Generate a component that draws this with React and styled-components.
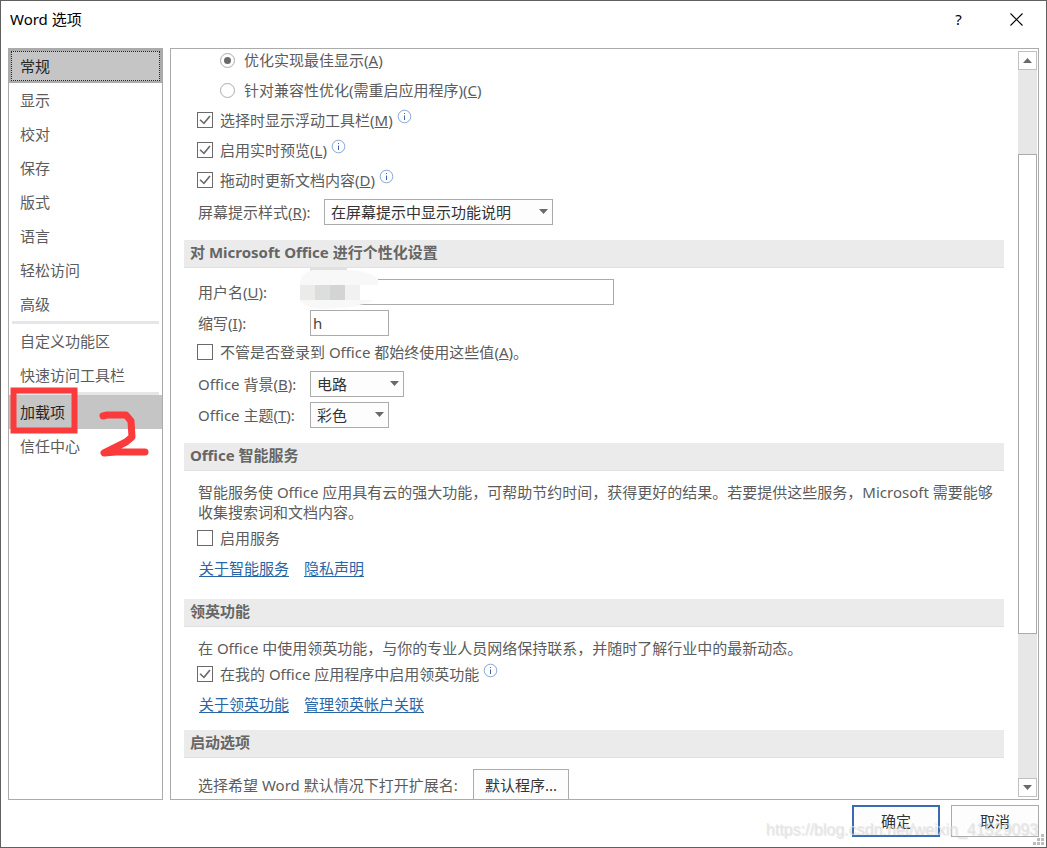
import styled, { createGlobalStyle, css } from "styled-components";

const GlobalStyle = createGlobalStyle`
  * {
    box-sizing: border-box;
  }

  body {
    margin: 0;
    background: #fff;
  }

  body,
  button,
  input,
  select {
    font-family: "Noto Sans", "Noto Sans CJK SC", sans-serif;
    font-size: 15px;
    line-height: 20px;
    color: #5c5c5c;
  }
`;

const Dialog = styled.div`
  position: relative;
  display: flex;
  flex-direction: column;
  height: 100vh;
  padding: 0 7px;
  border: 1px solid #606060;
  background: #fff;
  overflow: hidden;
`;

const TitleBar = styled.header`
  display: flex;
  align-items: center;
  flex: none;
  height: 47px;
  padding: 0 8px 11px 2px;
`;

const Title = styled.h1`
  flex: 1;
  margin: 0;
  font-size: 15px;
  font-weight: 400;
  color: #000;
`;

const TitleButton = styled.button`
  display: flex;
  align-items: center;
  justify-content: center;
  width: 29px;
  height: 29px;
  margin-left: 29px;
  padding: 0;
  border: 0;
  background: none;
  color: #000;
`;

const Body = styled.div`
  display: flex;
  flex: 1;
  gap: 7px;
  min-height: 0;
`;

const Sidebar = styled.nav`
  position: relative;
  flex: none;
  width: 155px;
  border: 1px solid #ababab;
`;

const NavItem = styled.button`
  display: block;
  width: 100%;
  height: 34px;
  padding: 0 11px;
  border: 0;
  background: none;
  text-align: left;

  ${(props) =>
    props.$highlight &&
    css`
      background: #c5c5c5;
      color: #262626;
    `}

  ${(props) =>
    props.$focused &&
    css`
      padding: 0 9px;
      border: 2px solid #ababab;
      outline: 1px dotted #262626;
      outline-offset: -3px;
    `}
`;

const Divider = styled.hr`
  height: 3px;
  margin: 0 3px;
  border: 0;
  background: #e6e6e6;
`;

const Marks = styled.svg`
  position: absolute;
  left: 0;
  top: 335px;
  pointer-events: none;
`;

const Pane = styled.main`
  display: flex;
  flex: 1;
  gap: 14px;
  min-width: 0;
  padding: 0 1px 0 13px;
  border: 1px solid #ababab;
`;

const Content = styled.div`
  flex: 1;
  min-width: 0;
  overflow: hidden;
`;

const Section = styled.section`
  display: flow-root;
  margin-bottom: ${(props) => (props.$spaced ? 15 : 10)}px;
`;

const SectionTitle = styled.h2`
  height: 28px;
  margin: 0 0 11px;
  padding: 1px 6px 0;
  border-bottom: 1px solid #e1e1e1;
  background: #ebebeb;
  font-size: 15px;
  line-height: 22px;
  font-weight: 700;
  color: #666;
`;

const OptionRow = styled.div`
  display: flex;
  align-items: center;
  gap: ${(props) => (props.$indent ? 9 : 7)}px;
  height: 22px;
  margin-bottom: 8px;
  padding-left: ${(props) => (props.$indent ? 36 : 13)}px;
`;

const Tick = styled.input`
  appearance: none;
  display: grid;
  place-items: center;
  flex: none;
  width: 16px;
  height: 16px;
  margin: 0;
  border: 1px solid #6a6a6a;
  background: #fff;

  &:checked::before {
    content: "";
    width: 12px;
    height: 10px;
    background: #6a6a6a;
    clip-path: polygon(4% 52%, 14% 42%, 40% 72%, 86% 6%, 97% 16%, 42% 94%);
  }
`;

const Radio = styled.input`
  appearance: none;
  display: grid;
  place-items: center;
  flex: none;
  width: 15px;
  height: 15px;
  margin: 0;
  border: 1px solid #ababab;
  border-radius: 50%;
  background: #fff;

  &:checked::before {
    content: "";
    width: 7px;
    height: 7px;
    border-radius: 50%;
    background: #6a6a6a;
  }
`;

const InfoButton = styled.button`
  display: flex;
  align-self: flex-start;
  margin: 0 0 0 -3px;
  padding: 0;
  border: 0;
  background: none;
`;

const FieldRow = styled.div`
  position: relative;
  display: flex;
  align-items: center;
  height: 26px;
  margin-bottom: 5px;
  padding-left: 14px;
`;

const FieldLabel = styled.label`
  flex: none;
  width: ${(props) => props.$width || 112}px;
`;

const TextBox = styled.input`
  width: ${(props) => props.$width}px;
  height: 26px;
  padding: 0 2px;
  border: 1px solid #ababab;
  background: #fff;
  color: #444;
`;

const SelectBox = styled.div`
  position: relative;
  width: ${(props) => props.$width}px;

  &::after {
    content: "";
    position: absolute;
    top: 10px;
    right: 5px;
    width: 9px;
    height: 5px;
    background: #6a6a6a;
    clip-path: polygon(0 0, 100% 0, 50% 100%);
    pointer-events: none;
  }

  select {
    appearance: none;
    display: block;
    width: 100%;
    height: 26px;
    padding: 0 6px;
    border: 1px solid #ababab;
    border-radius: 0;
    background: #fdfdfd;
    color: #333;
  }
`;

const Smudge = styled.svg`
  position: absolute;
  left: 116px;
  top: -12px;
`;

const Paragraph = styled.p`
  margin: 0 0 5px;
  padding-left: 14px;
`;

const Links = styled.div`
  display: flex;
  align-items: center;
  gap: 15px;
  height: 22px;
  margin-bottom: 5px;
  padding-left: 15px;

  a {
    color: #2a66a6;
    text-underline-offset: 2px;
  }
`;

const Button = styled.button`
  width: ${(props) => props.$width || 88}px;
  height: 32px;
  padding: 0;
  border: ${(props) => (props.$primary ? "2px solid #3c6ab4" : "1px solid #ababab")};
  background: #fdfdfd;
  color: #333;
`;

const FileTypeRow = styled(FieldRow)`
  height: 32px;
`;

const ScrollBar = styled.div`
  display: flex;
  flex-direction: column;
  flex: none;
  width: 19px;
  margin: 2px 0;
  background: #e7e7e7;
`;

const ScrollButton = styled.button`
  display: flex;
  align-items: center;
  justify-content: center;
  flex: none;
  height: 19px;
  padding: 0;
  border: 1px solid #c0c0c0;
  background: #fff;
`;

const ScrollSpace = styled.div`
  flex: ${(props) => props.$size} 0 0;
`;

const ScrollThumb = styled(ScrollSpace)`
  border: 1px solid #ababab;
  background: #fff;
`;

const Footer = styled.footer`
  display: flex;
  justify-content: flex-end;
  gap: 11px;
  flex: none;
  height: 47px;
  padding-top: 5px;
`;

const Watermark = styled.span`
  position: absolute;
  right: 8px;
  bottom: 7px;
  font-family: "Liberation Sans", Arial, sans-serif;
  font-size: 16px;
  color: rgba(225, 225, 225, 0.7);
  text-shadow: 1px 1px 1px rgba(150, 150, 150, 0.25);
  pointer-events: none;
`;

const Grip = styled.svg`
  position: absolute;
  right: 2px;
  bottom: 2px;
`;

const Info = () => (
  <InfoButton aria-label="信息">
    <svg width="15" height="15" viewBox="0 0 15 15" fill="none">
      <circle cx="7.5" cy="7.5" r="6.3" stroke="#8aa8d6" />
      <path d="M7.5 6.5v4.5" stroke="#3d64a8" />
      <path d="M7.5 4v1" stroke="#3d64a8" />
    </svg>
  </InfoButton>
);

const Key = ({ k }) => (
  <>
    (<u>{k}</u>)
  </>
);

function Check({ id, checked, info, children }) {
  return (
    <OptionRow>
      <Tick type="checkbox" id={id} defaultChecked={checked} />
      <label htmlFor={id}>{children}</label>
      {info && <Info />}
    </OptionRow>
  );
}

function Choice({ id, checked, children }) {
  return (
    <OptionRow $indent>
      <Radio type="radio" name="display" id={id} defaultChecked={checked} />
      <label htmlFor={id}>{children}</label>
    </OptionRow>
  );
}

function SelectField({ id, label, k, value, width, labelWidth }) {
  return (
    <FieldRow>
      <FieldLabel htmlFor={id} $width={labelWidth}>
        {label}
        <Key k={k} />:
      </FieldLabel>
      <SelectBox $width={width}>
        <select id={id}>
          <option>{value}</option>
        </select>
      </SelectBox>
    </FieldRow>
  );
}

const basicPages = ["显示", "校对", "保存", "版式", "语言", "轻松访问", "高级"];

export default function App() {
  return (
    <>
      <GlobalStyle />
      <Dialog role="dialog" aria-labelledby="title">
        <TitleBar>
          <Title id="title">Word 选项</Title>
          <TitleButton aria-label="帮助">?</TitleButton>
          <TitleButton aria-label="关闭">
            <svg width="13" height="13" viewBox="0 0 13 13">
              <path d="M.5.5l12 12M12.5.5l-12 12" stroke="#000" strokeWidth="1.1" />
            </svg>
          </TitleButton>
        </TitleBar>

        <Body>
          <Sidebar>
            <NavItem $highlight $focused>
              常规
            </NavItem>
            {basicPages.map((page) => (
              <NavItem key={page}>{page}</NavItem>
            ))}
            <Divider />
            <NavItem>自定义功能区</NavItem>
            <NavItem>快速访问工具栏</NavItem>
            <Divider />
            <NavItem $highlight>加载项</NavItem>
            <NavItem>信任中心</NavItem>
            <Marks width="150" height="80" viewBox="9 384 150 80" fill="none" stroke="#fb3b3b">
              <rect x="13.5" y="390.5" width="61" height="40" strokeWidth="6" />
              <path
                d="M103 416l4-1h19l5 6 1 16-6 5-22 11 12-1h29"
                strokeWidth="7"
                strokeLinecap="round"
                strokeLinejoin="round"
              />
            </Marks>
          </Sidebar>

          <Pane>
            <Content>
              <Section>
                <Choice id="best" checked>
                  优化实现最佳显示
                  <Key k="A" />
                </Choice>
                <Choice id="compat">
                  针对兼容性优化(需重启应用程序)
                  <Key k="C" />
                </Choice>
                <Check id="mini" checked info>
                  选择时显示浮动工具栏
                  <Key k="M" />
                </Check>
                <Check id="preview" checked info>
                  启用实时预览
                  <Key k="L" />
                </Check>
                <Check id="drag" checked info>
                  拖动时更新文档内容
                  <Key k="D" />
                </Check>
                <SelectField
                  id="tips"
                  label="屏幕提示样式"
                  k="R"
                  value="在屏幕提示中显示功能说明"
                  width={229}
                  labelWidth={126}
                />
              </Section>

              <Section>
                <SectionTitle>对 Microsoft Office 进行个性化设置</SectionTitle>
                <FieldRow>
                  <FieldLabel htmlFor="user">
                    用户名
                    <Key k="U" />:
                  </FieldLabel>
                  <TextBox id="user" $width={304} />
                  <Smudge width="80" height="42" viewBox="0 0 80 42">
                    <path d="M10 1h37v3H10z" fill="#e1e1e1" />
                    <path
                      d="M0 16C1 9 6 4 14 3h32c14 0 26 3 32 9v6H60v15h13c-3 3-9 4-14 5v1c-8 1-18 2-26 2-14 2-28 0-33-8z"
                      fill="#f8f8f8"
                    />
                    <path d="M60 18h15v14H60z" fill="#fff" />
                    <path d="M0 18h15v15H0z" fill="#ebebea" />
                    <path d="M15 18h15v15H15z" fill="#dcdddd" />
                    <path d="M30 18h15v15H30z" fill="#d4d4d4" />
                    <path d="M45 18h15v15H45z" fill="#f1f1f1" />
                  </Smudge>
                </FieldRow>
                <FieldRow>
                  <FieldLabel htmlFor="initials">
                    缩写
                    <Key k="I" />:
                  </FieldLabel>
                  <TextBox id="initials" $width={79} defaultValue="h" />
                </FieldRow>
                <Check id="always">
                  不管是否登录到 Office 都始终使用这些值
                  <Key k="A" />。
                </Check>
                <SelectField id="background" label="Office 背景" k="B" value="电路" width={94} />
                <SelectField id="theme" label="Office 主题" k="T" value="彩色" width={79} />
              </Section>

              <Section $spaced>
                <SectionTitle>Office 智能服务</SectionTitle>
                <Paragraph>
                  智能服务使 Office 应用具有云的强大功能，可帮助节约时间，获得更好的结果。若要提供这些服务，Microsoft
                  需要能够收集搜索词和文档内容。
                </Paragraph>
                <Check id="services">启用服务</Check>
                <Links>
                  <a href="#services-about">关于智能服务</a>
                  <a href="#privacy">隐私声明</a>
                </Links>
              </Section>

              <Section>
                <SectionTitle>领英功能</SectionTitle>
                <Paragraph>
                  在 Office 中使用领英功能，与你的专业人员网络保持联系，并随时了解行业中的最新动态。
                </Paragraph>
                <Check id="linkedin" checked info>
                  在我的 Office 应用程序中启用领英功能
                </Check>
                <Links>
                  <a href="#linkedin-about">关于领英功能</a>
                  <a href="#linkedin-account">管理领英帐户关联</a>
                </Links>
              </Section>

              <Section>
                <SectionTitle>启动选项</SectionTitle>
                <FileTypeRow>
                  <FieldLabel htmlFor="defaults" $width={275}>
                    选择希望 Word 默认情况下打开扩展名:
                  </FieldLabel>
                  <Button id="defaults" $width={96}>
                    默认程序...
                  </Button>
                </FileTypeRow>
              </Section>
            </Content>

            <ScrollBar>
              <ScrollButton aria-label="向上滚动">
                <svg width="9" height="5" viewBox="0 0 9 5">
                  <path d="M0 5L4.500 0 9 5z" fill="#6a6a6a" />
                </svg>
              </ScrollButton>
              <ScrollSpace $size={84} />
              <ScrollThumb $size={480} />
              <ScrollSpace $size={144} />
              <ScrollButton aria-label="向下滚动">
                <svg width="9" height="5" viewBox="0 0 9 5">
                  <path d="M0 0h9L4.500 5z" fill="#6a6a6a" />
                </svg>
              </ScrollButton>
            </ScrollBar>
          </Pane>
        </Body>

        <Footer>
          <Button $primary>确定</Button>
          <Button>取消</Button>
        </Footer>
        <Watermark>https://blog.csdn.net/weixin_41529093</Watermark>
        <Grip width="11" height="11" viewBox="0 0 11 11" fill="#bdbdbd">
          <path d="M8 0h3v3H8zM4 4h3v3H4zM8 4h3v3H8zM0 8h3v3H0zM4 8h3v3H4zM8 8h3v3H8z" />
        </Grip>
      </Dialog>
    </>
  );
}
